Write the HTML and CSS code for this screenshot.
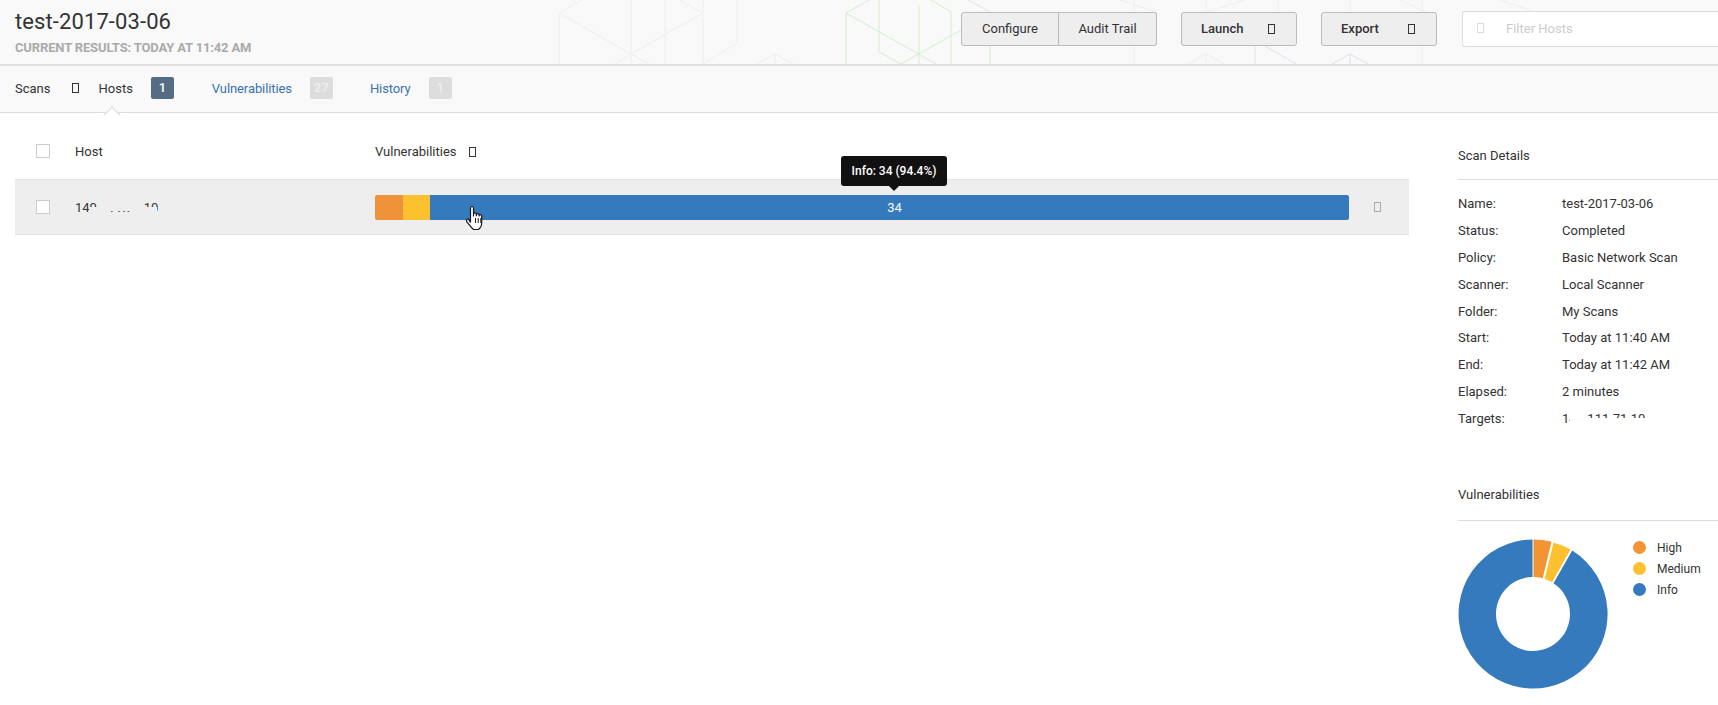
FILE: index.html
```html
<!DOCTYPE html>
<html lang="en">
<head>
  <meta charset="UTF-8" />
  <title>test-2017-03-06</title>
  <link rel="stylesheet" href="styles.css">
</head>
<body>
  <!-- Title bar -->
  <header class="titlebar">
    <svg class="hexes" width="1718" height="64" viewBox="0 0 1718 64" fill="none">
      <path class="hex-gray" d="M559 13L631 54L703 13M559 13L582 0M703 13L680 0M559 13V64M631 0V64M665 0V64M703 0V64M737 0V43L703 64M631 54L615 64M631 54L649 64M775 54L757 64M775 54V64M775 54L793 64"/>
      <path class="hex-green" d="M846 13L869 0M846 13L936 64M846 13V64M879 0V52L901 64M919 5V64M901 64L961 30M931 0L951 12V64M968 0L990 12M990 45V64"/>
      <path class="hex-gray" d="M1134 0V64M1206 54V64M1206 54L1188 64M1206 54L1224 64M1278 0V12M1422 0V64M1350 0V12M1206 0V12M1157 12L1120 0M1245 0L1206 12M1400 0L1430 14M1500 0L1540 14"/>
      <path class="hex-purple" d="M1255 45V64M1263 45L1296 64M1350 54V64M1350 54L1332 64M1350 54L1368 64"/>
    </svg>
    <div class="title-text">
      <h1>test-2017-03-06</h1>
      <div class="subtitle">CURRENT RESULTS: TODAY AT 11:42 AM</div>
    </div>
    <div class="toolbar">
      <div class="btn-group">
        <button class="btn">Configure</button>
        <button class="btn">Audit Trail</button>
      </div>
      <button class="btn btn-menu">Launch <i class="tofu"></i></button>
      <button class="btn btn-menu">Export <i class="tofu"></i></button>
      <div class="filter">
        <i class="tofu tofu-pale"></i>
        <span>Filter Hosts</span>
      </div>
    </div>
  </header>

  <!-- Tabs -->
  <nav class="tabs">
    <span class="crumb">Scans</span>
    <i class="tofu crumb-sep"></i>
    <span class="tab tab-active">Hosts <b class="badge badge-dark">1</b></span>
    <a class="tab">Vulnerabilities <b class="badge">27</b></a>
    <a class="tab">History <b class="badge">1</b></a>
  </nav>

  <div class="content">
    <main class="results">
      <div class="results-head">
        <span class="check"></span>
        <span class="col-host">Host</span>
        <span class="col-vulns">Vulnerabilities <i class="tofu sort-icon"></i></span>
      </div>
      <div class="host-row">
        <span class="check"></span>
        <span class="col-host host-ip">140.111.71.10<i class="mask mask-a"></i><i class="mask mask-b"></i><i class="mask mask-c"></i><i class="mask mask-f"></i></span>
        <div class="col-vulns">
          <div class="bar">
            <div class="seg seg-high"></div>
            <div class="seg seg-medium"></div>
            <div class="seg seg-info">34</div>
          </div>
        </div>
        <i class="tofu row-remove"></i>
        <div class="tooltip">Info: 34 (94.4%)</div>
        <svg class="cursor" width="22" height="27" viewBox="0 0 22 27">
          <path d="M6.5 17.5V3a1.5 1.5 0 0 1 3 0v8.500l0-2.200a1.400 1.400 0 0 1 2.800 0v2l0-1.200a1.400 1.400 0 0 1 2.800 0v1.500l0-.7a1.300 1.300 0 0 1 2.600 0v6.600c0 3.500-1.800 6-3.500 7H9.500c-1.300-1-2.300-2-3.500-3.800L2.800 16.800c-1.300-2 1-3.400 2.300-1.900z" fill="#fff" stroke="#1a1a22" stroke-width="1.200"/>
          <path d="M11.500 13v5M14.200 13v5M16.800 13v5" stroke="#1a1a22" fill="none"/>
        </svg>
      </div>
    </main>

    <aside class="sidebar">
      <h3>Scan Details</h3>
      <dl class="details">
        <dt>Name:</dt><dd>test-2017-03-06</dd>
        <dt>Status:</dt><dd>Completed</dd>
        <dt>Policy:</dt><dd>Basic Network Scan</dd>
        <dt>Scanner:</dt><dd>Local Scanner</dd>
        <dt>Folder:</dt><dd>My Scans</dd>
        <dt>Start:</dt><dd>Today at 11:40 AM</dd>
        <dt>End:</dt><dd>Today at 11:42 AM</dd>
        <dt>Elapsed:</dt><dd>2 minutes</dd>
        <dt>Targets:</dt><dd class="target">140.111.71.10<i class="mask mask-d"></i><i class="mask mask-e"></i></dd>
      </dl>

      <h3 class="vulns-title">Vulnerabilities</h3>
      <div class="chart">
        <svg width="150" height="150" viewBox="-75 -75 150 150">
          <path d="M0.500 -74.500A74.500 74.500 0 0 1 18.500 -72.200L9.700 -35.700A37 37 0 0 0 0.500 -37z" fill="#f29433"/>
          <path d="M20.500 -71.600A74.500 74.500 0 0 1 37.500 -64.400L19.200 -31.800A37 37 0 0 0 11.700 -35.100z" fill="#fdc02f"/>
          <path d="M39.200 -63.400A74.500 74.500 0 1 1 -0.500 -74.500V-37A37 37 0 1 0 20.500 -30.800z" fill="#357abd"/>
        </svg>
        <ul class="legend">
          <li><i class="dot dot-high"></i>High</li>
          <li><i class="dot dot-medium"></i>Medium</li>
          <li><i class="dot dot-info"></i>Info</li>
        </ul>
      </div>
    </aside>
  </div>
</body>
</html>
```
FILE: styles.css
```css
* {
  box-sizing: border-box;
}

html, body {
  height: 705px;
  overflow: hidden;
}

body {
  margin: 0;
  width: 1718px;
  font-family: "Roboto", "Liberation Sans", sans-serif;
  font-size: 13px;
  color: #333;
  background: #fff;
}

i {
  font-style: normal;
}

/* missing icon font glyph */
.tofu {
  display: inline-block;
  width: 7px;
  height: 10px;
  border: 1px solid #333;
}

.tofu-pale {
  border-color: #ddd;
}

/* title bar */
.titlebar {
  position: relative;
  height: 66px;
  padding: 0 0 0 15px;
  display: flex;
  justify-content: space-between;
  background: #f9f9f9;
  border-bottom: 2px solid #e0e0e0;
}

.hexes {
  position: absolute;
  left: 0;
  top: 0;
}

.hex-gray { stroke: #eeeeee; }
.hex-green { stroke: #d5ebd0; }
.hex-purple { stroke: #e6dcec; }

.title-text {
  position: relative;
  padding-top: 9px;
}

h1 {
  margin: 0;
  font-size: 22px;
  font-weight: 400;
  letter-spacing: 0.1px;
  line-height: 26px;
  color: #333;
}

.subtitle {
  margin-top: 5px;
  font-size: 13px;
  font-weight: 700;
  letter-spacing: -0.15px;
  color: #aaa;
}

.toolbar {
  position: relative;
  display: flex;
  gap: 24px;
  align-items: flex-start;
  padding-top: 12px;
  width: 757px;
  flex: none;
}

.btn {
  height: 34px;
  padding: 0 0 1px;
  font: 400 13px "Roboto", "Liberation Sans", sans-serif;
  color: #333;
  background: #eee;
  border: 1px solid #bbb;
  border-radius: 3px;
}

.btn-group {
  display: flex;
}

.btn-group .btn:first-child {
  width: 98px;
  border-radius: 3px 0 0 3px;
}

.btn-group .btn:last-child {
  width: 98px;
  border-left: 0;
  border-radius: 0 3px 3px 0;
}

.btn-menu {
  width: 116px;
  display: flex;
  align-items: center;
  justify-content: space-between;
  padding: 0 21px 1px 19px;
  font-weight: 500;
}

.filter {
  margin: -1px 0 0 1px;
  flex: 1;
  height: 36px;
  display: flex;
  align-items: center;
  gap: 22px;
  padding: 0 0 2px 14px;
  background: #fff;
  border: 1px solid #ddd;
  border-right: 0;
  border-radius: 3px 0 0 3px;
  color: #ccc;
}

/* tabs */
.tabs {
  position: relative;
  height: 47px;
  display: flex;
  align-items: center;
  padding: 0 0 2px 15px;
  background: #f9f9f9;
  border-bottom: 1px solid #ddd;
}

.crumb-sep {
  margin: 0 19px 0 22px;
}

.tab {
  position: relative;
  display: inline-flex;
  align-items: center;
  color: #3a72b0;
  letter-spacing: -0.1px;
  margin-right: 37px;
}

.tab-active {
  color: #333;
  letter-spacing: 0;
  margin-right: 38px;
}

.tab-active::after {
  content: "";
  position: absolute;
  left: 8px;
  bottom: -22px;
  width: 11px;
  height: 11px;
  background: #fff;
  border-left: 1px solid #ddd;
  border-top: 1px solid #ddd;
  transform: rotate(45deg);
}

.badge {
  display: inline-block;
  width: 23px;
  height: 22px;
  margin-left: 18px;
  line-height: 22px;
  text-align: center;
  font-weight: 500;
  color: #eee;
  background: #ddd;
  border-radius: 2px;
}

.badge-dark {
  color: #fff;
  background: #566c85;
}

/* page body */
.content {
  display: flex;
  padding-left: 15px;
}

.results {
  width: 1394px;
  flex: none;
  padding-top: 18px;
}

.results-head {
  height: 48px;
  display: flex;
  align-items: center;
  padding-bottom: 8px;
}

.check {
  flex: none;
  width: 14px;
  height: 14px;
  margin-left: 21px;
  background: #fff;
  border: 1px solid #ccc;
}

.col-host {
  position: relative;
  flex: none;
  width: 300px;
  margin-left: 25px;
}

.col-vulns {
  flex: none;
  width: 974px;
}

.sort-icon {
  margin-left: 9px;
  vertical-align: -1px;
}

.host-row {
  position: relative;
  height: 56px;
  display: flex;
  align-items: center;
  background: #eee;
  border-top: 1px solid #e4e4e4;
  border-bottom: 1px solid #e4e4e4;
}

.host-ip {
  color: #333;
}

/* blanked out parts of the address */
.mask {
  position: absolute;
  background: #eee;
}

.mask-a { left: 14px; top: 7px; width: 22px; height: 10px; }
.mask-b { left: 22px; top: 0; width: 14px; height: 18px; }
.mask-c { left: 36px; top: 0; width: 32px; height: 11px; }
.mask-f { left: 56px; top: 7px; width: 26px; height: 10px; }

.bar {
  height: 25px;
  display: flex;
  overflow: hidden;
  border-radius: 2px;
}

.seg-high { width: 28px; background: #f0923a; }
.seg-medium { width: 27px; background: #fdc02f; }

.seg-info {
  flex: 1;
  padding-left: 10px;
  text-align: center;
  line-height: 25px;
  color: #fff;
  background: #357abd;
}

.row-remove {
  margin-left: 25px;
  border-color: #aaa;
}

.tooltip {
  position: absolute;
  left: 826px;
  top: -24px;
  width: 106px;
  height: 30px;
  line-height: 30px;
  text-align: center;
  font-size: 12px;
  font-weight: 500;
  color: #fff;
  background: #111;
  border-radius: 3px;
}

.tooltip::after {
  content: "";
  position: absolute;
  left: 48px;
  top: 30px;
  border: 5px solid transparent;
  border-top-color: #111;
  border-bottom: 0;
}

.cursor {
  position: absolute;
  left: 449px;
  top: 25px;
}

/* side panel */
.sidebar {
  margin-left: 49px;
  width: 300px;
  flex: none;
}

h3 {
  margin: 0;
  height: 67px;
  padding-top: 34px;
  font-size: 13px;
  font-weight: 400;
  line-height: 17px;
  border-bottom: 1px solid #ddd;
}

.details {
  margin: 11px 0 0;
  display: grid;
  grid-template-columns: 104px 1fr;
  grid-auto-rows: 26.900px;
  line-height: 26.900px;
}

.details dd {
  margin: 0;
  position: relative;
}

.target {
  width: 90px;
}

.mask-d { left: 8px; top: 0; width: 14px; height: 13px; background: #fff; }
.mask-e { left: 8px; top: 12px; width: 78px; height: 11px; background: #fff; }

h3.vulns-title {
  margin-top: 53px;
  height: 35px;
  padding-top: 0;
  border-bottom: 1px solid #ddd;
}

.chart {
  margin-top: 18px;
  display: flex;
}

.legend {
  list-style: none;
  margin: -2px 0 0;
  padding: 0 0 0 25px;
}

.legend li {
  display: flex;
  align-items: center;
  height: 21px;
  font-size: 12px;
}

.dot {
  width: 13px;
  height: 13px;
  margin-right: 11px;
  border-radius: 50%;
}

.dot-high { background: #f29433; }
.dot-medium { background: #fdc02f; }
.dot-info { background: #357abd; }
```
